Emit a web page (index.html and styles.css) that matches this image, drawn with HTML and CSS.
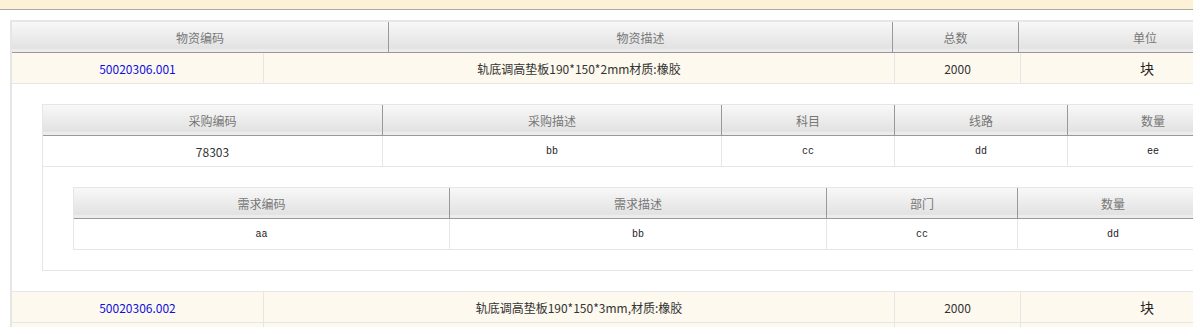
FILE: index.html
```html
<!DOCTYPE html>
<html lang="zh-CN">
<head>
<meta charset="utf-8">
<title>物资明细</title>
<link rel="stylesheet" href="styles.css">
</head>
<body>
<div class="topbar"></div>
<div class="page">
  <div class="mtable">
    <div class="row head m-cols">
      <div class="th">物资编码</div>
      <div class="th">物资描述</div>
      <div class="th">总数</div>
      <div class="th">单位</div>
    </div>

    <div class="row item mb-cols">
      <div class="td"><a class="code" href="#">50020306.001</a></div>
      <div class="td">轨底调高垫板190*150*2mm材质:橡胶</div>
      <div class="td">2000</div>
      <div class="td big">块</div>
    </div>

    <div class="detail">
      <div class="sub purchase">
        <div class="row head p-cols">
          <div class="th">采购编码</div>
          <div class="th">采购描述</div>
          <div class="th">科目</div>
          <div class="th">线路</div>
          <div class="th">数量</div>
        </div>
        <div class="row data p-cols">
          <div class="td">78303</div>
          <div class="td mono">bb</div>
          <div class="td mono">cc</div>
          <div class="td mono">dd</div>
          <div class="td mono">ee</div>
        </div>
        <div class="sub-body">
          <div class="sub demand">
            <div class="row head d-cols">
              <div class="th">需求编码</div>
              <div class="th">需求描述</div>
              <div class="th">部门</div>
              <div class="th">数量</div>
            </div>
            <div class="row data d-cols">
              <div class="td mono">aa</div>
              <div class="td mono">bb</div>
              <div class="td mono">cc</div>
              <div class="td mono">dd</div>
            </div>
          </div>
        </div>
      </div>
    </div>

    <div class="row item mb-cols">
      <div class="td"><a class="code" href="#">50020306.002</a></div>
      <div class="td">轨底调高垫板190*150*3mm,材质:橡胶</div>
      <div class="td">2000</div>
      <div class="td big">块</div>
    </div>

    <div class="row item mb-cols">
      <div class="td"></div>
      <div class="td"></div>
      <div class="td"></div>
      <div class="td"></div>
    </div>
  </div>
</div>
</body>
</html>
```
FILE: styles.css
```css
html, body {
  margin: 0;
  padding: 0;
  overflow: hidden;
  background: #fff;
}

body {
  font-family: "Noto Sans CJK SC", "Noto Sans", sans-serif;
  font-size: 12px;
  color: #333;
}

/* notice strip along the top */
.topbar {
  height: 9px;
  background: #fef2d6;
  border-bottom: 1px solid #a9a9a9;
}

.page {
  padding: 10px 0 0 10px;
}

/* outer material table */
.mtable {
  width: 1262px;
  box-sizing: border-box;
  border-left: 2px solid #e6e6e6;
}

.row {
  display: grid;
}

.m-cols  { grid-template-columns: 377px 504px 126px 253px; }
.mb-cols { grid-template-columns: 252px 631px 126px 253px; }
.p-cols  { grid-template-columns: 340px 339px 173px 173px 171px; }
.d-cols  { grid-template-columns: 376px 377px 191px 191px; }

.th, .td {
  box-sizing: border-box;
  height: 30px;
  display: flex;
  align-items: center;
  justify-content: center;
  white-space: nowrap;
  overflow: hidden;
}

/* header bands */
.head {
  border-top: 2px solid #e6e6e6;
  border-bottom: 1px solid #999;
}

.sub .head {
  border-top-width: 1px;
}

.th {
  color: #777;
  border-right: 1px solid #999;
  background: linear-gradient(#f8f8f8, #e2e2e2 88%, #ececec 90%, #ececec);
}

.td {
  border-right: 1px solid #e6e6e6;
}

/* material rows */
.item {
  background: #fdf9ee;
  border-bottom: 1px solid #e6e6e6;
}

.code {
  color: #1010e0;
  text-decoration: none;
}

.big {
  font-size: 14px;
  color: #222;
}

.data {
  background: #fff;
  border-bottom: 1px solid #e6e6e6;
}

.mono {
  font-family: "Liberation Mono", "DejaVu Sans Mono", monospace;
  font-size: 10px;
  color: #222;
}

/* expanded detail for a material row */
.detail {
  padding: 20px 30px;
  border-bottom: 1px solid #e6e6e6;
}

.sub {
  box-sizing: border-box;
  border-left: 1px solid #e6e6e6;
}

.purchase {
  width: 1197px;
  border-bottom: 1px solid #e6e6e6;
}

.sub-body {
  padding: 20px 30px;
}

.demand {
  width: 1136px;
}
```
